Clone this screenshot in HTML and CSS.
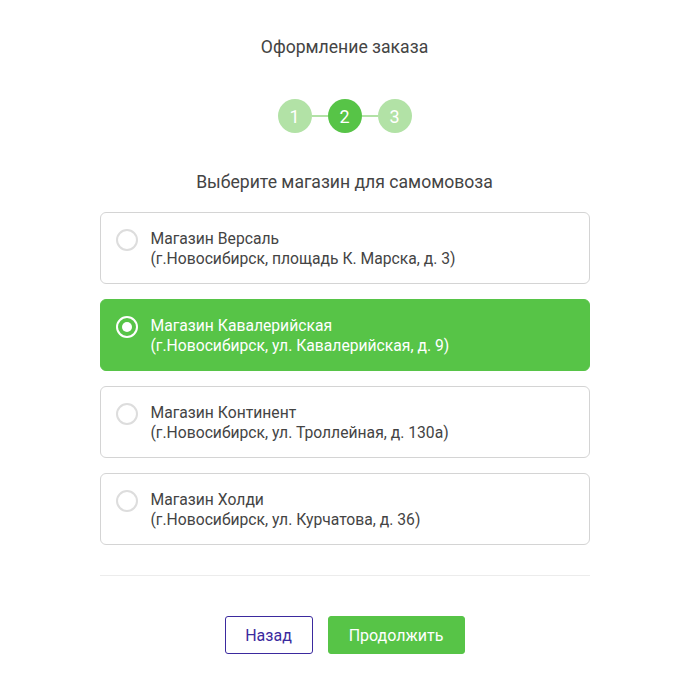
FILE: index.html
```html
<!DOCTYPE html>
<html lang="ru">
<head>
  <meta charset="UTF-8" />
  <meta name="viewport" content="width=device-width, initial-scale=1.0" />
  <title>Оформление заказа</title>
  <link rel="stylesheet" href="styles.css">
</head>
<body>
  <main class="checkout">
    <h1 class="title">Оформление заказа</h1>

    <div class="steps">
      <span class="step">1</span>
      <span class="step-line"></span>
      <span class="step active">2</span>
      <span class="step-line"></span>
      <span class="step">3</span>
    </div>

    <h2 class="subtitle">Выберите магазин для самомовоза</h2>

    <form class="shops">
      <label class="shop">
        <input type="radio" name="shop" />
        <span class="radio"></span>
        <span class="shop-text">Магазин Версаль<br>(г.Новосибирск, площадь К. Марска, д. 3)</span>
      </label>
      <label class="shop selected">
        <input type="radio" name="shop" checked />
        <span class="radio"></span>
        <span class="shop-text">Магазин Кавалерийская<br>(г.Новосибирск, ул. Кавалерийская, д. 9)</span>
      </label>
      <label class="shop">
        <input type="radio" name="shop" />
        <span class="radio"></span>
        <span class="shop-text">Магазин Континент<br>(г.Новосибирск, ул. Троллейная, д. 130а)</span>
      </label>
      <label class="shop">
        <input type="radio" name="shop" />
        <span class="radio"></span>
        <span class="shop-text">Магазин Холди<br>(г.Новосибирск, ул. Курчатова, д. 36)</span>
      </label>
    </form>

    <hr class="divider" />

    <div class="actions">
      <button type="button" class="btn btn-back">Назад</button>
      <button type="button" class="btn btn-next">Продолжить</button>
    </div>
  </main>
</body>
</html>
```

FILE: styles.css
```css
body {
  margin: 0;
  font-family: Roboto, 'Liberation Sans', sans-serif;
  background: #fff;
  color: #444;
}
.checkout {
  width: 490px;
  margin: 0 auto;
  padding-top: 35px;
}
.title {
  margin: 0;
  font-size: 17.6px;
  font-weight: 400;
  line-height: 24px;
  text-align: center;
  color: #444;
}
.steps {
  display: flex;
  justify-content: center;
  align-items: center;
  margin-top: 40px;
}
.step {
  width: 34px;
  height: 34px;
  border-radius: 50%;
  background: #b2e2a6;
  color: #fff;
  font-size: 18px;
  font-weight: 400;
  display: flex;
  align-items: center;
  justify-content: center;
}
.step.active {
  background: #57c447;
}
.step-line {
  width: 16px;
  height: 2px;
  background: #b2e2a6;
}
.subtitle {
  margin: 37px 0 0;
  font-size: 17.6px;
  font-weight: 400;
  line-height: 24px;
  text-align: center;
  color: #444;
}
.shops {
  display: flex;
  flex-direction: column;
  gap: 15px;
  margin-top: 18px;
}
.shop {
  display: flex;
  align-items: flex-start;
  height: 72px;
  box-sizing: border-box;
  border: 1px solid #d4d4d4;
  border-radius: 6px;
  padding: 16px 15px 0;
  cursor: pointer;
}
.shop input {
  display: none;
}
.radio {
  width: 22px;
  height: 22px;
  box-sizing: border-box;
  border: 2px solid #ddd;
  border-radius: 50%;
  flex-shrink: 0;
  margin-right: 13px;
  position: relative;
}
.shop-text {
  font-size: 15.7px;
  font-weight: 400;
  line-height: 20px;
  color: #444;
}
.shop.selected {
  background: #57c447;
  border-color: #57c447;
}
.shop.selected .shop-text {
  color: #fff;
}
.shop.selected .radio {
  border-color: #fff;
}
.shop.selected .radio::after {
  content: "";
  position: absolute;
  left: 4px;
  top: 4px;
  width: 10px;
  height: 10px;
  border-radius: 50%;
  background: #fff;
}
.divider {
  border: none;
  border-top: 1px solid #ececec;
  margin: 30px 0 0;
}
.actions {
  display: flex;
  justify-content: center;
  gap: 15px;
  margin-top: 40px;
}
.btn {
  height: 38px;
  border-radius: 3px;
  font-family: Roboto, 'Liberation Sans', sans-serif;
  font-size: 16px;
  font-weight: 400;
  cursor: pointer;
}
.btn-back {
  width: 88px;
  background: #fff;
  border: 1px solid #3b2a9e;
  color: #3b2a9e;
}
.btn-next {
  width: 137px;
  background: #57c447;
  border: 1px solid #57c447;
  color: #fff;
}
```
